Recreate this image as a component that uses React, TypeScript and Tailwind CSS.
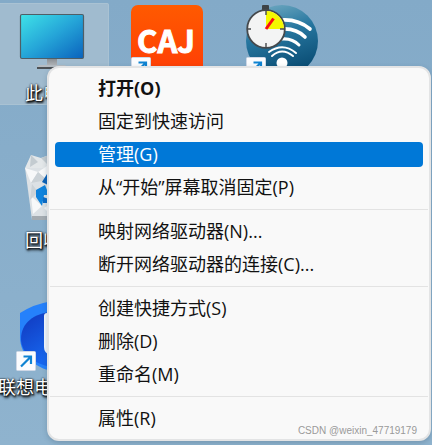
import type { ReactNode } from "react";
import { clsx } from "clsx";

type MenuItem = { label: string; bold?: boolean; active?: boolean };

const groups: MenuItem[][] = [
  [
    { label: "打开(O)", bold: true },
    { label: "固定到快速访问" },
    { label: "管理(G)", active: true },
    { label: "从“开始”屏幕取消固定(P)" },
  ],
  [{ label: "映射网络驱动器(N)..." }, { label: "断开网络驱动器的连接(C)..." }],
  [{ label: "创建快捷方式(S)" }, { label: "删除(D)" }, { label: "重命名(M)" }],
  [{ label: "属性(R)" }],
];

function ShortcutArrow() {
  return (
    <g>
      <rect x="0.5" y="52.5" width="19" height="19" rx="1" fill="#fbfcfe" stroke="#cfd8e6" />
      <path d="M5 67.5L14 58.5M7.5 57.5H15V65" fill="none" stroke="#0f83d2" strokeWidth="2.2" />
    </g>
  );
}

function MonitorIcon() {
  return (
    <svg className="size-18" viewBox="0 0 72 72" aria-hidden="true">
      <defs>
        <linearGradient id="screen" x1="0" y1="0" x2="1" y2="1">
          <stop offset="0" stopColor="#3fe3e8" />
          <stop offset="0.5" stopColor="#25a5d8" />
          <stop offset="1" stopColor="#0a62bd" />
        </linearGradient>
        <linearGradient id="stand" x1="0" y1="0" x2="0" y2="1">
          <stop offset="0" stopColor="#8a8f94" />
          <stop offset="1" stopColor="#b9bdc1" />
        </linearGradient>
      </defs>
      <rect x="31" y="54" width="10" height="8" fill="url(#stand)" />
      <path d="M23 60H49L51 62H21Z" fill="#b5bcc2" />
      <rect x="21" y="62" width="30" height="2" fill="#4c5156" />
      <rect x="4.5" y="9.5" width="63" height="44" rx="1.5" fill="url(#screen)" stroke="#4f5e66" strokeWidth="1.2" />
    </svg>
  );
}

function CajIcon() {
  return (
    <svg className="size-18" viewBox="0 0 72 72" aria-hidden="true">
      <defs>
        <linearGradient id="caj" x1="0" y1="0" x2="0" y2="1">
          <stop offset="0" stopColor="#ff5a00" />
          <stop offset="1" stopColor="#ff3c06" />
        </linearGradient>
      </defs>
      <rect width="72" height="72" rx="7" fill="url(#caj)" />
      <text
        x="35"
        y="48"
        textAnchor="middle"
        fill="#fff"
        stroke="#fff"
        strokeWidth="1"
        className="font-['Noto_Sans_CJK_SC',sans-serif] text-[31px] font-bold"
      >
        CAJ
      </text>
      <ShortcutArrow />
    </svg>
  );
}

function WifiTimerIcon() {
  return (
    <svg className="size-18" viewBox="0 0 72 72" aria-hidden="true">
      <defs>
        <linearGradient id="disc" x1="0.3" y1="0" x2="0.6" y2="1">
          <stop offset="0" stopColor="#6ba6bf" />
          <stop offset="0.4" stopColor="#26769f" />
          <stop offset="1" stopColor="#07486f" />
        </linearGradient>
      </defs>
      <circle cx="36" cy="36" r="36" fill="url(#disc)" />
      <g fill="none" stroke="#fff" strokeLinecap="round">
        <path d="M36 15Q52 14 64 24" strokeWidth="3.6" />
        <path d="M36 24Q50 23 59 32" strokeWidth="3.6" />
        <path d="M36 34Q46 33 53 40" strokeWidth="3" />
        <path d="M23 47Q37 37 50 48" strokeWidth="2" />
        <path d="M26 51Q36 42 47 51" strokeWidth="2" />
      </g>
      <circle cx="36" cy="58" r="5.5" fill="#fff" />
      <rect x="16" y="0" width="7" height="6" rx="1" fill="#3d4245" />
      <rect x="18" y="5" width="4" height="5" fill="#555b5e" />
      <circle cx="20" cy="24" r="18.8" fill="#f3f4f4" stroke="#45494c" strokeWidth="1.8" />
      <path d="M20 24V6A18 18 0 0 1 38 24Z" fill="#f4f800" />
      <path d="M20 5V10M20 38V43M1 24H5M34 24H39" stroke="#45494c" strokeWidth="1.4" />
      <path d="M20 24L27.5 13.5" stroke="#f80d13" strokeWidth="3" />
      <ShortcutArrow />
    </svg>
  );
}

function RecycleBinIcon() {
  return (
    <svg className="size-18" viewBox="0 0 72 72" aria-hidden="true">
      <path d="M9 16L15 3L25 6L36 2L48 6L58 4L63 16Z" fill="#e3e7e9" />
      <path d="M15 3L22 10L14 15ZM25 6L36 2L33 14Z" fill="#c3cbd0" />
      <path d="M9 16H63L56 68H16Z" fill="#dce1e5" />
      <path d="M9 16L22 20L15 31ZM22 20L34 12L31 28ZM15 44L26 54L17 62ZM28 56L38 50L36 64Z" fill="#f7f8f9" />
      <path d="M22 20L31 28L15 31ZM16 32L22 40L14 48Z" fill="#cbd2d7" />
      <path d="M16 64H57L56 68H16Z" fill="#a4abb1" />
      <path d="M26 30L31 22H40L34 34Z" fill="#0b62b8" />
      <path d="M20 38L29 33L33 43L28 43L26 54L20 45Z" fill="#0f83dd" />
      <path d="M27 45L36 48V51H27Z" fill="#0c6cc8" />
    </svg>
  );
}

function ShieldIcon() {
  return (
    <svg className="size-18" viewBox="0 0 72 72" aria-hidden="true">
      <defs>
        <linearGradient id="shield" x1="0" y1="0" x2="0.4" y2="1">
          <stop offset="0" stopColor="#1037bd" />
          <stop offset="1" stopColor="#1765ed" />
        </linearGradient>
      </defs>
      <path d="M4 14Q18 5 36 2Q54 5 68 14V38C68 57 50 69 36 72C20 69 4 57 4 38Z" fill="#2581fb" />
      <path d="M5 40C5 24 18 14 36 13V68C19 66 5 54 5 40Z" fill="url(#shield)" />
      <path d="M28 17Q28 14 31 14H43V56H34Q28 54 28 48Z" fill="#f5f9ff" />
      <ShortcutArrow />
    </svg>
  );
}

type DesktopIconProps = {
  name: string;
  label?: string;
  selected?: boolean;
  children: ReactNode;
};

function DesktopIcon({ name, label, selected, children }: DesktopIconProps) {
  return (
    <button
      type="button"
      aria-label={name}
      className={clsx(
        "flex flex-col items-center gap-1 self-start rounded-xs pt-0.5",
        selected && "bg-[#a0bbcf] outline -outline-offset-1 outline-[#a9c2d3]",
      )}
    >
      {children}
      {label && (
        <span className="h-6 text-lg leading-6 whitespace-nowrap text-white [text-shadow:0_0_2px_#000,1px_1px_2px_#000,1px_2px_3px_#000]">
          {label}
        </span>
      )}
    </button>
  );
}

function ContextMenu() {
  return (
    <div
      role="menu"
      className="absolute top-[66px] right-px left-[47px] rounded-xl border-2 border-[#e3e4e5] bg-[#f9f9f9] py-2 shadow-[0_2px_5px_rgba(40,70,95,0.25)]"
    >
      {groups.map((group, index) => (
        <div key={index} role="group">
          {index > 0 && <hr className="mx-px my-[9px] border-[#e3e3e3]" />}
          <div className="flex flex-col gap-2 px-1.5">
            {group.map((item) => (
              <button
                key={item.label}
                type="button"
                role="menuitem"
                className={clsx(
                  "h-[25px] rounded pb-px pl-[43px] text-left text-lg leading-6 whitespace-nowrap",
                  item.active ? "bg-[#0078d7] text-white" : "text-[#111]",
                  item.bold && "font-bold",
                )}
              >
                {item.label}
              </button>
            ))}
          </div>
        </div>
      ))}
      <span className="absolute right-3 bottom-0.5 font-['Liberation_Sans',sans-serif] text-[10px] leading-3 text-[#999]">
        CSDN @weixin_47719179
      </span>
    </div>
  );
}

export default function App() {
  return (
    <main className="relative min-h-screen overflow-hidden bg-linear-to-b from-[#83aac8] to-[#8fb3ce] font-['Open_Sans','Noto_Sans_CJK_SC',sans-serif]">
      <div className="-ml-[5px] grid auto-rows-[147px] grid-cols-[repeat(3,114px)] gap-x-px pt-[3px]">
        <DesktopIcon name="此电脑" label="此电脑" selected>
          <MonitorIcon />
        </DesktopIcon>
        <DesktopIcon name="CAJ">
          <CajIcon />
        </DesktopIcon>
        <DesktopIcon name="WiFi">
          <WifiTimerIcon />
        </DesktopIcon>
        <div className="col-start-1 grid">
          <DesktopIcon name="回收站" label="回收站">
            <RecycleBinIcon />
          </DesktopIcon>
        </div>
        <div className="col-start-1 grid">
          <DesktopIcon name="联想电脑管家" label="联想电脑管家">
            <ShieldIcon />
          </DesktopIcon>
        </div>
      </div>
      <ContextMenu />
    </main>
  );
}
